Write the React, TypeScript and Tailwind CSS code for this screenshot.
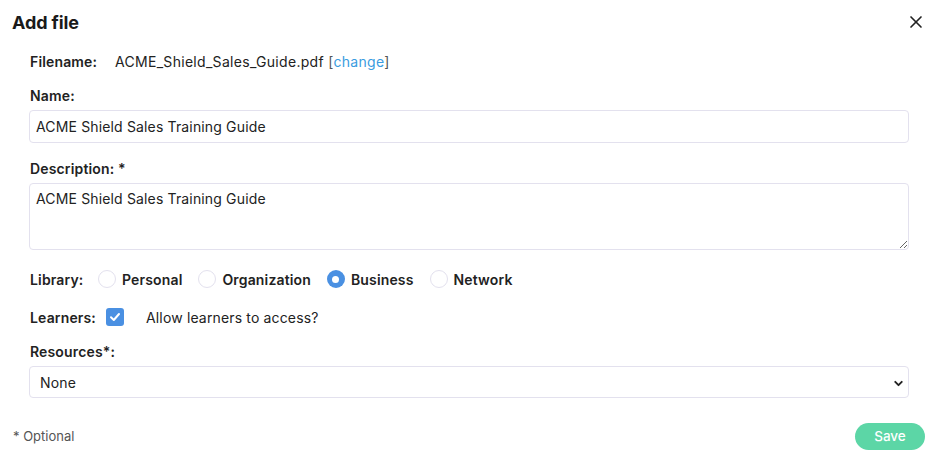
import { ChevronDown, X } from "lucide-react";

const libraries = [
  { label: "Personal", checked: false },
  { label: "Organization", checked: false },
  { label: "Business", checked: true },
  { label: "Network", checked: false },
];

function Radio({ checked }: { checked: boolean }) {
  if (checked) {
    return (
      <span className="flex h-[18px] w-[18px] items-center justify-center rounded-full bg-[#4a90e2]">
        <span className="h-[7px] w-[7px] rounded-full bg-white" />
      </span>
    );
  }
  return <span className="h-[18px] w-[18px] rounded-full border border-[#e3e1ee] bg-white" />;
}

export default function App() {
  return (
    <div
      className="relative h-[472px] w-[944px] overflow-hidden bg-white text-[#222]"
      style={{ fontFamily: "Inter, 'Noto Sans', sans-serif" }}
    >
      {/* Header */}
      <div className="flex h-[44px] items-center justify-between pl-[12px] pr-[18px]">
        <h2 className="text-[18px] font-bold tracking-[-0.1px] text-[#1a1a1a]">Add file</h2>
        <X size={20} strokeWidth={2} className="text-[#222]" />
      </div>

      <div className="pl-[29px] pr-[35px] text-[14px] tracking-[0.15px]">
        {/* Filename */}
        <div className="mt-[6px] flex h-[22px] items-center pl-[1px]">
          <span className="w-[85px] font-semibold">Filename:</span>
          <span className="tracking-[0.3px]">
            ACME_Shield_Sales_Guide.pdf <span className="text-[#555]">[</span>
            <span className="text-[#3a9ce0]">change</span>
            <span className="text-[#555]">]</span>
          </span>
        </div>

        {/* Name */}
        <div className="mt-[12px] flex h-[22px] items-center pl-[1px] font-semibold">Name:</div>
        <input
          readOnly
          defaultValue="ACME Shield Sales Training Guide"
          className="mt-[4px] h-[33px] w-full rounded-[4px] border border-[#e3e1ee] px-[6px] text-[#222] outline-none"
        />

        {/* Description */}
        <div className="mt-[14px] flex h-[22px] items-center pl-[1px] font-semibold">Description: *</div>
        <textarea
          readOnly
          defaultValue="ACME Shield Sales Training Guide"
          className="mt-[4px] block h-[67px] w-full rounded-[4px] border border-[#e3e1ee] px-[6px] py-[6px] leading-[18px] text-[#222] outline-none"
        />

        {/* Library */}
        <div className="mt-[18px] flex h-[22px] items-center pl-[1px]">
          <span className="w-[68px] font-semibold">Library:</span>
          <div className="flex items-center gap-[16px]">
            {libraries.map((lib) => (
              <label key={lib.label} className="flex items-center gap-[6px] font-semibold">
                <Radio checked={lib.checked} />
                {lib.label}
              </label>
            ))}
          </div>
        </div>

        {/* Learners */}
        <div className="mt-[16px] flex h-[22px] items-center pl-[1px]">
          <span className="w-[76px] font-semibold">Learners:</span>
          <span className="flex h-[18px] w-[18px] items-center justify-center rounded-[3px] bg-[#4a90e2]">
            <svg width="12" height="12" viewBox="0 0 12 12" fill="none">
              <path d="M2 6.3 L4.8 9 L10 3" stroke="white" strokeWidth="2" strokeLinecap="round" strokeLinejoin="round" />
            </svg>
          </span>
          <span className="ml-[22px]">Allow learners to access?</span>
        </div>

        {/* Resources */}
        <div className="mt-[12px] flex h-[22px] items-center pl-[1px] font-semibold">Resources*:</div>
        <div className="relative mt-[4px] flex h-[32px] w-full items-center rounded-[4px] border border-[#e3e1ee] pl-[10px]">
          None
          <ChevronDown size={13} strokeWidth={3.5} className="absolute right-[3px] top-[10px] text-[#222]" />
        </div>
      </div>

      {/* Footer */}
      <div className="mt-[25px] flex items-center justify-between pl-[13px] pr-[19px]">
        <span className="text-[13px] text-[#555]">* Optional</span>
        <button className="flex h-[27px] w-[70px] items-center justify-center rounded-full bg-[#5cd6a6] text-[13.5px] font-medium text-white">
          Save
        </button>
      </div>
    </div>
  );
}
